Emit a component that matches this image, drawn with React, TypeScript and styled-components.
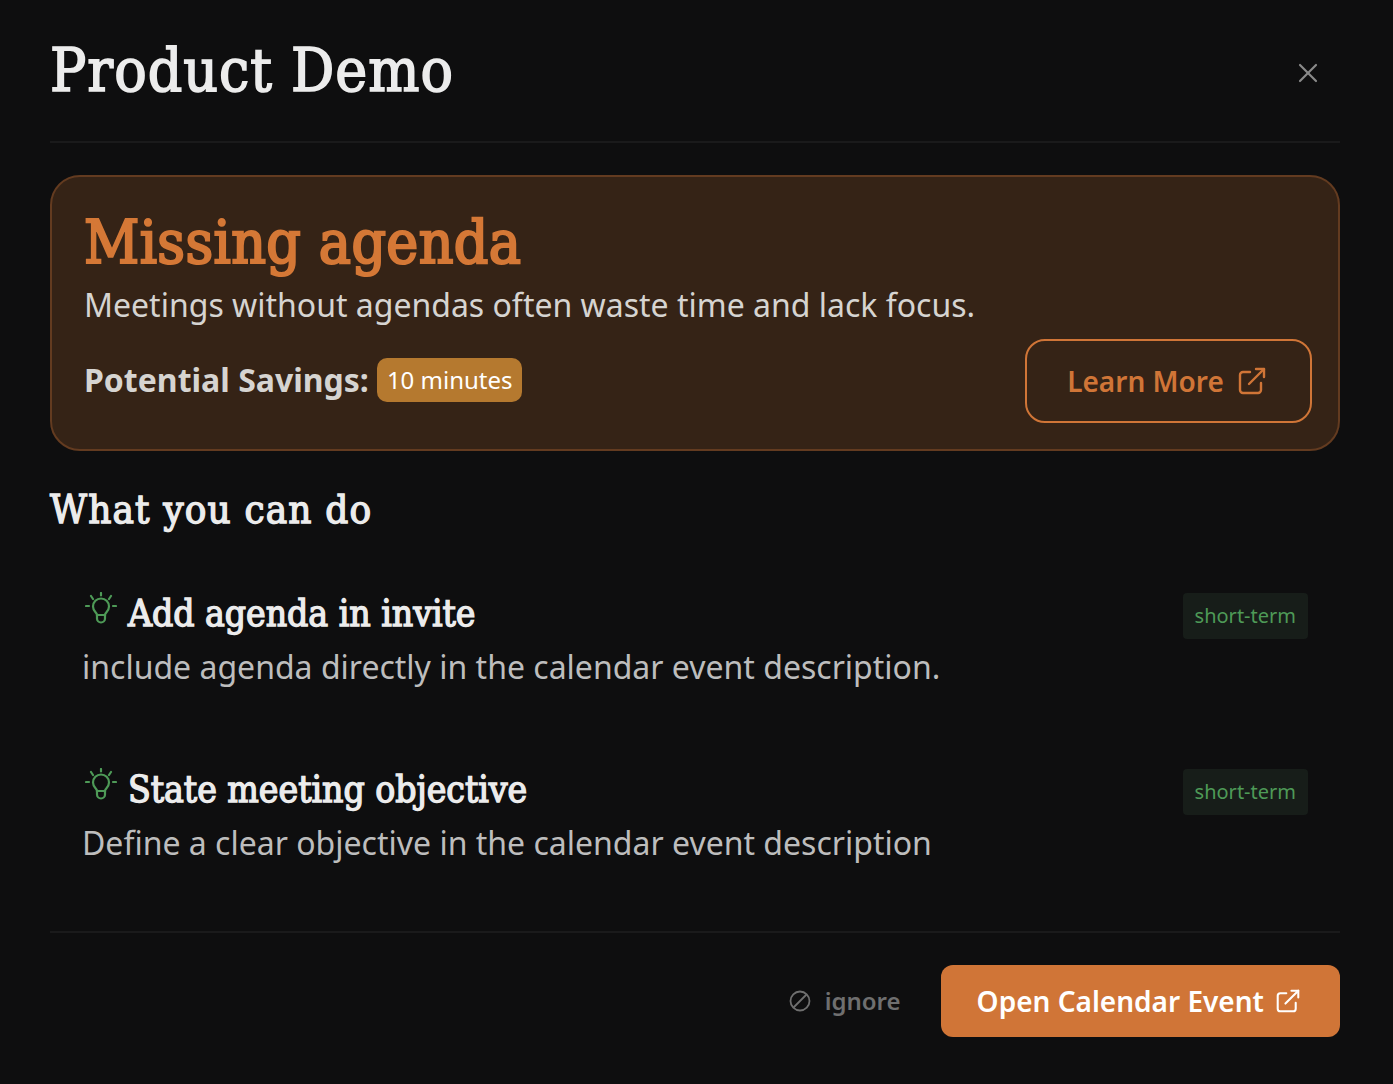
import styled, { createGlobalStyle } from "styled-components";
import { X } from "lucide-react";

const GlobalStyle = createGlobalStyle`
    html, body {
        margin: 0;
        background-color: #0e0e0f;
    }
    body {
        font-family: "Noto Sans", "Liberation Sans", sans-serif;
    }
`

const Modal = styled.div`
    width: 1393px;
    height: 1084px;
    box-sizing: border-box;
    padding: 0 53px 0 50px;
    background-color: #0e0e0f;
    overflow: hidden;
`

const Header = styled.header`
    display: flex;
    justify-content: space-between;
    align-items: center;
    height: 143px;
    box-sizing: border-box;
    padding-right: 16px;
    border-bottom: 2px solid #1a1a1b;
`

const Title = styled.h1`
    margin: -2px 0 0;
    font-family: "DejaVu Serif Condensed", "DejaVu Serif", serif;
    font-size: 60px;
    font-weight: 400;
    letter-spacing: 1px;
    -webkit-text-stroke: 1.6px #ececec;
    color: #ececec;
`

const CloseButton = styled.div`
    display: flex;
    margin-top: 5px;
    color: #8a8a8a;
`

const Card = styled.section`
    display: flex;
    flex-direction: column;
    height: 276px;
    box-sizing: border-box;
    margin-top: 32px;
    padding: 29px 26px 0 32px;
    background-color: #352316;
    border: 2px solid #633b20;
    border-radius: 30px;
`

const CardTitle = styled.h2`
    margin: 0;
    font-family: "DejaVu Serif Condensed", "DejaVu Serif", serif;
    font-size: 60px;
    line-height: 72px;
    font-weight: 400;
    letter-spacing: 0.4px;
    -webkit-text-stroke: 2.2px #d57836;
    color: #d57836;
`

const CardText = styled.p`
    margin: 5px 0 0;
    font-size: 32px;
    line-height: 44px;
    color: #d6d4d1;
`

const CardFoot = styled.div`
    display: flex;
    justify-content: space-between;
    align-items: center;
    margin-top: 12px;
`

const Savings = styled.div`
    display: flex;
    align-items: center;
    gap: 8px;
    margin-top: -2px;
    font-size: 32px;
    line-height: 42px;
    font-weight: 700;
    color: #d6d4d1;
`

const Badge = styled.span`
    padding: 0 9.5px 0 10px;
    height: 44px;
    line-height: 44px;
    font-size: 24px;
    font-weight: 400;
    color: #fff;
    background-color: #b5792f;
    border-radius: 10px;
`

const OutlineButton = styled.div`
    display: flex;
    justify-content: center;
    align-items: center;
    gap: 14px;
    width: 287px;
    height: 84px;
    box-sizing: border-box;
    padding-right: 4px;
    font-size: 28px;
    font-weight: 600;
    color: #d07537;
    border: 2px solid #d07537;
    border-radius: 20px;
`

const SectionTitle = styled.h3`
    margin: 32px 0 0;
    font-family: "DejaVu Serif Condensed", "DejaVu Serif", serif;
    font-size: 40px;
    line-height: 52px;
    font-weight: 400;
    letter-spacing: 1.15px;
    -webkit-text-stroke: 1.3px #ececec;
    color: #ececec;
`

const SuggestionList = styled.div`
    margin-top: 48px;
`

const Suggestion = styled.div`
    display: flex;
    justify-content: space-between;
    align-items: flex-start;
    height: 176px;
    box-sizing: border-box;
    padding: 0 32px;
`

const SuggestionHead = styled.div`
    display: flex;
    align-items: center;
    gap: 14px;
    height: 62px;

    svg {
        margin: -12px -3px 0 3px;
    }
`

const SuggestionTitle = styled.h4`
    margin: -2px 0 0;
    font-family: "DejaVu Serif Condensed", "DejaVu Serif", serif;
    font-size: 37px;
    font-weight: 400;
    letter-spacing: -0.05px;
    -webkit-text-stroke: 1.3px #ececec;
    color: #ececec;
`

const SuggestionText = styled.p`
    margin: 0;
    font-size: 32px;
    line-height: 44px;
    color: #bdbdbd;
`

const Tag = styled.span`
    margin-top: 10px;
    padding: 0 12px;
    height: 46px;
    line-height: 46px;
    font-size: 20px;
    color: #4e9a57;
    background-color: #171d19;
    border-radius: 4px;
`

const Footer = styled.footer`
    display: flex;
    justify-content: flex-end;
    align-items: center;
    gap: 40px;
    height: 137px;
    box-sizing: border-box;
    margin-top: -4px;
    border-top: 2px solid #1a1a1b;
`

const IgnoreButton = styled.div`
    display: flex;
    align-items: center;
    gap: 14px;
    font-size: 24px;
    font-weight: 600;
    color: #6f6f6f;
`

const PrimaryButton = styled.div`
    display: flex;
    align-items: center;
    gap: 12px;
    height: 72px;
    padding: 0 40px 0 36px;
    font-size: 28px;
    font-weight: 600;
    color: #fff;
    background-color: #d07537;
    border-radius: 12px;
`

function ExternalIcon({ size }: { size: number }) {
    return (
        <svg width={size} height={size} viewBox="0 0 28 28" fill="none" stroke="currentColor" strokeWidth="2.4" strokeLinecap="round" strokeLinejoin="round">
            <path d="M12 5H5a3 3 0 0 0-3 3v15a3 3 0 0 0 3 3h15a3 3 0 0 0 3-3v-7" />
            <path d="M11 17L26 2" />
            <path d="M18 2h8v8" />
        </svg>
    );
}

function BulbIcon() {
    return (
        <svg width="32" height="32" viewBox="0 0 32 32" fill="none" stroke="#4e9a57" strokeWidth="2.2" strokeLinecap="round">
            <path d="M12 23c0-2.500-4-3.500-4-8.500a8 8 0 0 1 16 0c0 5-4 6-4 8.500z" />
            <path d="M12 23v3.500a4 4 0 0 0 4 4 4 4 0 0 0 4-4V23" />
            <path d="M16 1v2.500M6 4l2 3M26 4l-2 3M1 14h3M28 14h3" />
        </svg>
    );
}

function BanIcon() {
    return (
        <svg width="22" height="22" viewBox="0 0 22 22" fill="none" stroke="#6f6f6f" strokeWidth="1.8">
            <circle cx="11" cy="11" r="9.500" />
            <path d="M4.500 17.500L17.500 4.500" />
        </svg>
    );
}

const suggestions = [
    { title: "Add agenda in invite", text: "include agenda directly in the calendar event description." },
    { title: "State meeting objective", text: "Define a clear objective in the calendar event description" },
];

export default function App() {
    return (
        <Modal>
            <GlobalStyle />
            <Header>
                <Title>Product Demo</Title>
                <CloseButton><X size={32} strokeWidth={1.6} /></CloseButton>
            </Header>
            <Card>
                <CardTitle>Missing agenda</CardTitle>
                <CardText>Meetings without agendas often waste time and lack focus.</CardText>
                <CardFoot>
                    <Savings>
                        Potential Savings:
                        <Badge>10 minutes</Badge>
                    </Savings>
                    <OutlineButton>
                        Learn More
                        <ExternalIcon size={28} />
                    </OutlineButton>
                </CardFoot>
            </Card>
            <SectionTitle>What you can do</SectionTitle>
            <SuggestionList>
                {suggestions.map((item) => (
                    <Suggestion key={item.title}>
                        <div>
                            <SuggestionHead>
                                <BulbIcon />
                                <SuggestionTitle>{item.title}</SuggestionTitle>
                            </SuggestionHead>
                            <SuggestionText>{item.text}</SuggestionText>
                        </div>
                        <Tag>short-term</Tag>
                    </Suggestion>
                ))}
            </SuggestionList>
            <Footer>
                <IgnoreButton><BanIcon />ignore</IgnoreButton>
                <PrimaryButton>
                    Open Calendar Event
                    <ExternalIcon size={24} />
                </PrimaryButton>
            </Footer>
        </Modal>
    );
}
